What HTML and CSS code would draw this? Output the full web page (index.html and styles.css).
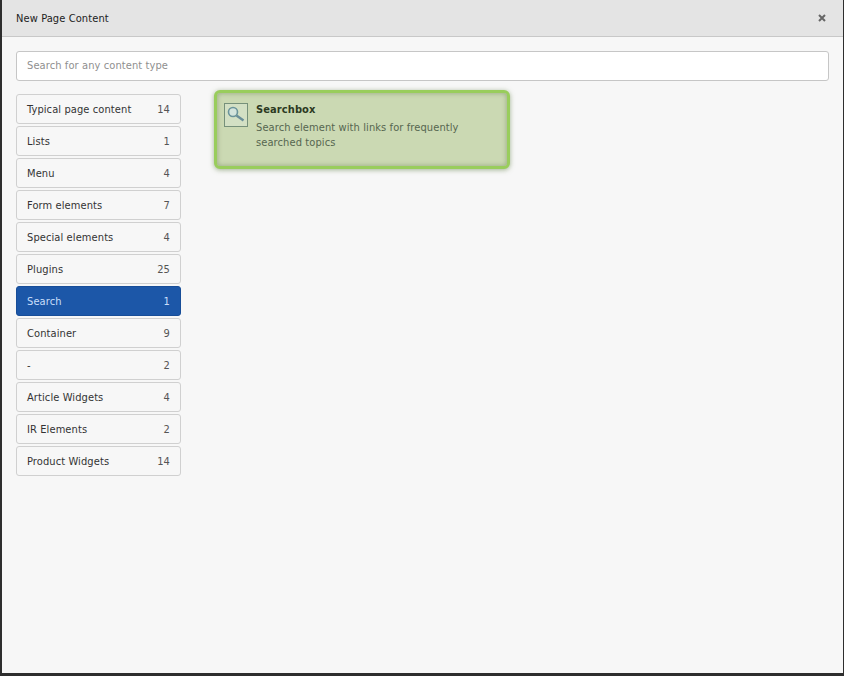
FILE: index.html
```html
<!DOCTYPE html>
<html lang="en">
<head>
<meta charset="utf-8">
<title>New Page Content</title>
<link rel="stylesheet" href="styles.css">
</head>
<body>
<div class="modal">
  <header class="modal-header">
    <h1 class="modal-title">New Page Content</h1>
    <svg class="close" width="8" height="8" viewBox="0 0 8 8" aria-label="Close"><path d="M1 1l6 6M7 1L1 7" stroke="#666" stroke-width="2" fill="none"/></svg>
  </header>
  <main class="modal-body">
    <input class="search" type="text" placeholder="Search for any content type">
    <div class="columns">
      <nav class="tabs">
        <a class="tab"><span>Typical page content</span><span class="count">14</span></a>
        <a class="tab"><span>Lists</span><span class="count">1</span></a>
        <a class="tab"><span>Menu</span><span class="count">4</span></a>
        <a class="tab"><span>Form elements</span><span class="count">7</span></a>
        <a class="tab"><span>Special elements</span><span class="count">4</span></a>
        <a class="tab"><span>Plugins</span><span class="count">25</span></a>
        <a class="tab active"><span>Search</span><span class="count">1</span></a>
        <a class="tab"><span>Container</span><span class="count">9</span></a>
        <a class="tab"><span>-</span><span class="count">2</span></a>
        <a class="tab"><span>Article Widgets</span><span class="count">4</span></a>
        <a class="tab"><span>IR Elements</span><span class="count">2</span></a>
        <a class="tab"><span>Product Widgets</span><span class="count">14</span></a>
      </nav>
      <section class="results">
        <article class="card">
          <div class="card-icon">
            <svg width="24" height="24" viewBox="0 0 24 24">
              <rect x="0.5" y="0.5" width="23" height="23" fill="#d3e0c4" stroke="#76907a"/>
              <circle cx="9" cy="9" r="4.5" fill="#d4e4dc" stroke="#6b949a" stroke-width="1.6"/>
              <path d="M12.5 12.5l7 5" stroke="#6b8f98" stroke-width="2.4" fill="none"/>
            </svg>
          </div>
          <div class="card-text">
            <h2 class="card-title">Searchbox</h2>
            <p class="card-desc">Search element with links for frequently searched topics</p>
          </div>
        </article>
      </section>
    </div>
  </main>
</div>
</body>
</html>
```
FILE: styles.css
```css
* { box-sizing: border-box; }
html, body { height: 100%; }
body {
  margin: 0;
  background: #2e2e2e;
  padding: 0 1px 3px 2px;
  font-family: "DejaVu Sans Condensed", "DejaVu Sans", Verdana, sans-serif;
  font-stretch: condensed;
  font-size: 11px;
  letter-spacing: 0.1px;
  color: #333;
}
.modal {
  height: 100%;
  background: #f7f7f7;
  display: flex;
  flex-direction: column;
}
.modal-header {
  height: 37px;
  flex: none;
  background: #e4e4e4;
  border-bottom: 1px solid #c8c8c8;
  display: flex;
  align-items: center;
  justify-content: space-between;
  padding: 0 17px 0 14px;
}
.modal-title {
  margin: 0;
  font-size: 11px;
  font-weight: 400;
  color: #222;
}
.close { display: block; }
.modal-body {
  flex: 1;
  padding: 14px 14px 0;
}
.search {
  display: block;
  width: 813px;
  height: 30px;
  padding: 0 10px 2px;
  background: #fff;
  border: 1px solid #c6c6c6;
  border-radius: 3px;
  font: inherit;
  letter-spacing: inherit;
  color: #333;
}
.search::placeholder { color: #8f8f8f; opacity: 1; }
.columns {
  display: flex;
  gap: 33px;
  margin-top: 9px;
  align-items: flex-start;
}
.tabs {
  width: 165px;
  flex: none;
  display: flex;
  flex-direction: column;
  gap: 2px;
  padding-top: 4px;
}
.tab {
  height: 30px;
  display: flex;
  align-items: center;
  justify-content: space-between;
  padding: 0 10px;
  background: #f7f7f7;
  border: 1px solid #d0d0d0;
  border-radius: 3px;
  color: #333;
}
.tab .count { color: #555; }
.tab.active {
  background: #1c57a8;
  border-color: #174d98;
  color: #c9defa;
}
.tab.active .count { color: #c9defa; }
.results { flex: none; }
.card {
  width: 296px;
  height: 79px;
  display: flex;
  gap: 7px;
  padding: 9px 6px;
  background: #cbd9b3;
  border: 3px solid #99cd5c;
  border-radius: 6px;
  box-shadow: 0 1px 5px rgba(90, 120, 60, 0.55), inset 0 0 5px rgba(110, 130, 90, 0.6);
}
.card-icon { flex: none; height: 24px; margin: 1px 1px 0 1px; }
.card-icon svg { display: block; }
.card-text { padding-top: 1px; }
.card-title {
  margin: 0 0 3px;
  font-size: 11px;
  font-weight: 700;
  line-height: 14px;
  color: #2c3a22;
}
.card-desc {
  margin: 0;
  line-height: 15px;
  color: #566650;
}
```
